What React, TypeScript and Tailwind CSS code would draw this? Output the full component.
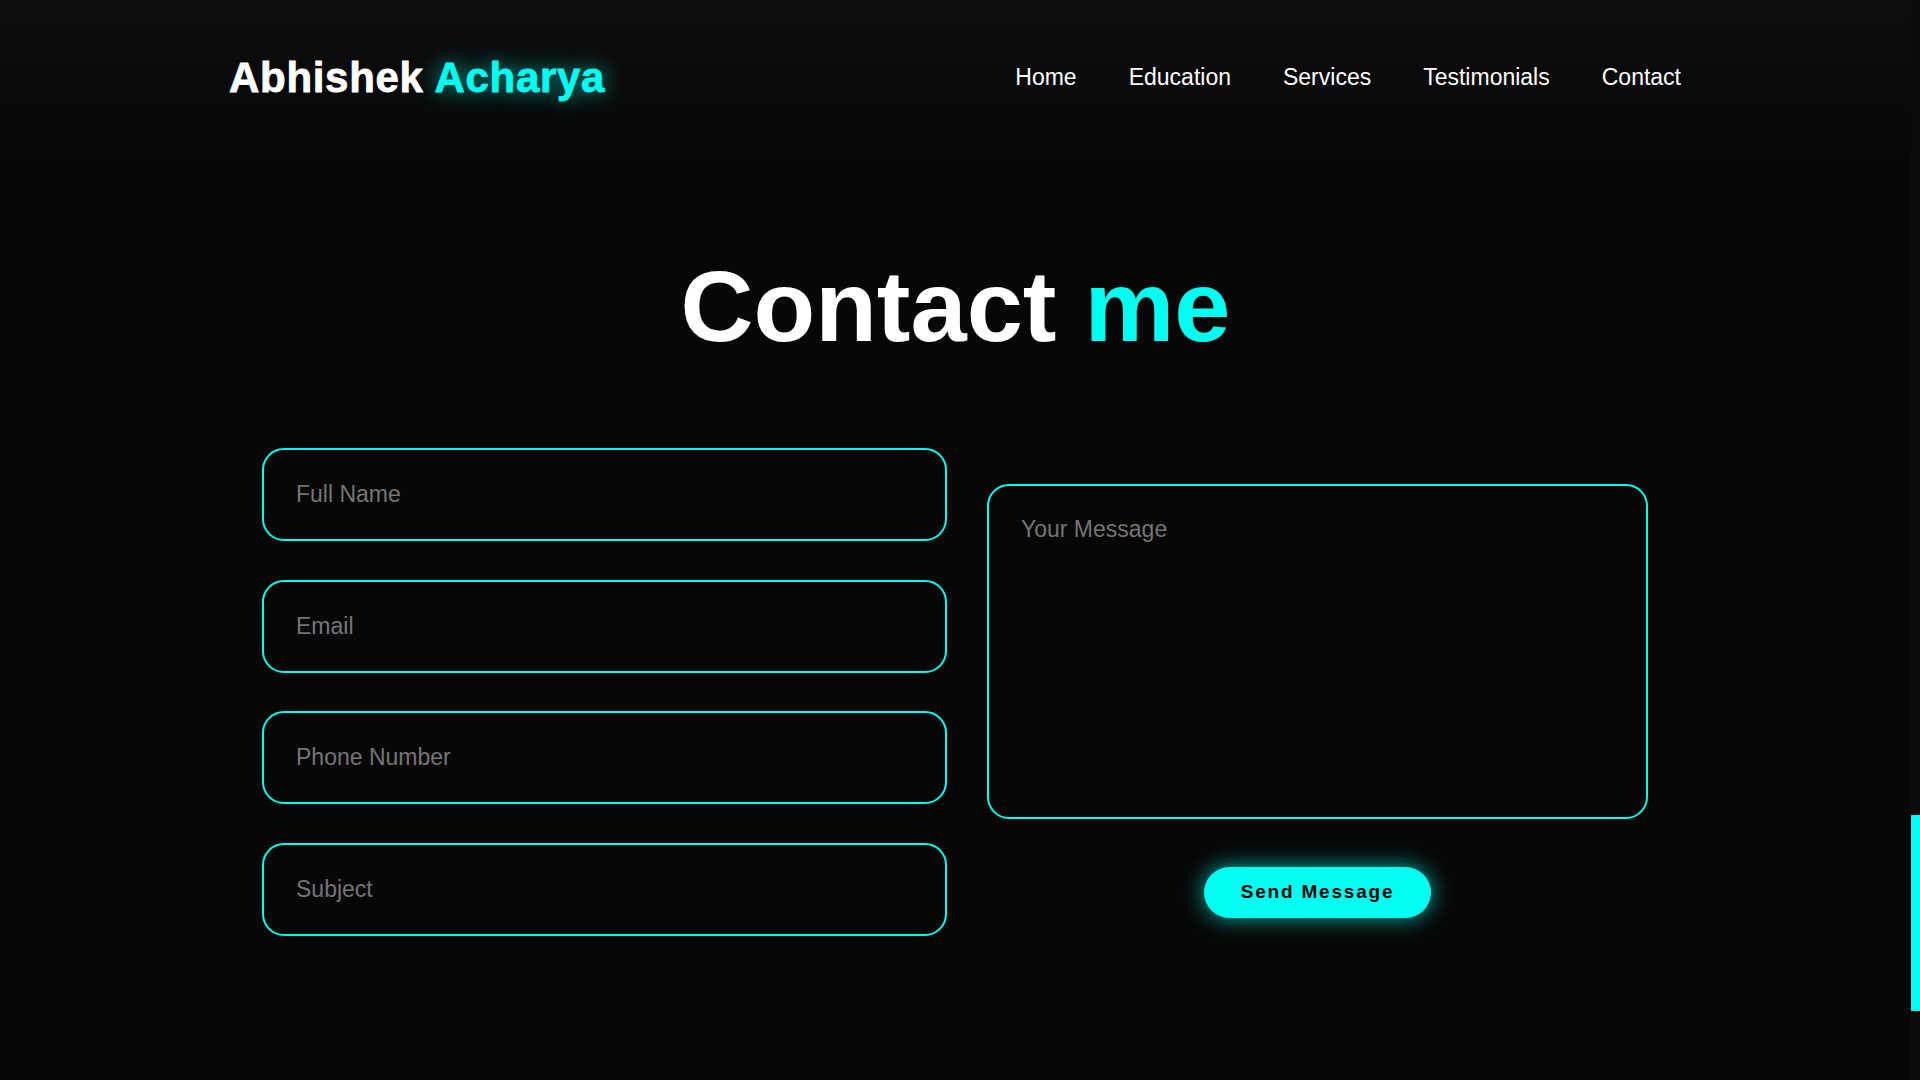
import React from "react";

const font = { fontFamily: '"Liberation Sans", Arial, Helvetica, sans-serif' };

function Field({ placeholder }: { placeholder: string }) {
  return (
    <input
      type="text"
      placeholder={placeholder}
      className="h-[93px] w-full rounded-[22px] border-2 border-[#00fff0] bg-[#070707] pl-[32px] text-[23px] text-white outline-none placeholder:text-[#757575]"
      style={font}
    />
  );
}

export default function App() {
  return (
    <div className="flex h-screen w-full overflow-hidden bg-[#070707]" style={font}>
      <main className="flex min-w-0 flex-1 flex-col">
        <header className="flex h-[154px] items-center justify-between bg-gradient-to-b from-[#0e0e0e] to-[#070707] pl-[229px] pr-[230px]">
          <div className="text-[42px] font-bold tracking-[0.7px] text-white [-webkit-text-stroke:0.8px_currentColor]">
            Abhishek{" "}
            <span className="text-[#00fff0] [text-shadow:0_0_22px_rgba(0,255,240,0.75)]">Acharya</span>
          </div>
          <nav className="flex gap-[52px] text-[23px] text-white">
            <a href="#">Home</a>
            <a href="#">Education</a>
            <a href="#">Services</a>
            <a href="#">Testimonials</a>
            <a href="#">Contact</a>
          </nav>
        </header>

        <h1 className="mt-[102px] text-center text-[101px] font-bold leading-none text-white">
          Contact <span className="text-[#00fff0]">me</span>
        </h1>

        <form className="mt-[91px] flex items-start gap-[40px] pl-[262px] pr-[263px]">
          <div className="flex w-[685px] flex-col gap-[38.5px]">
            <Field placeholder="Full Name" />
            <Field placeholder="Email" />
            <Field placeholder="Phone Number" />
            <Field placeholder="Subject" />
          </div>
          <div className="mt-[36px] flex flex-1 flex-col items-center">
            <textarea
              placeholder="Your Message"
              className="h-[335px] w-full resize-none rounded-[22px] border-2 border-[#00fff0] bg-[#070707] px-[32px] pt-[26px] text-[23px] text-white outline-none placeholder:text-[#757575]"
              style={font}
            />
            <button
              type="button"
              className="mt-[48px] h-[51px] w-[227px] rounded-full bg-[#00fff0] text-[19px] font-bold tracking-[1.8px] text-[#050505] shadow-[0_0_22px_rgba(0,255,240,0.7)]"
              style={font}
            >
              Send Message
            </button>
          </div>
        </form>
      </main>
      <aside className="w-[9px] shrink-0 bg-[#0b0b0b]">
        <div className="mt-[815px] h-[196px] w-full bg-[#00fff0]" />
      </aside>
    </div>
  );
}
